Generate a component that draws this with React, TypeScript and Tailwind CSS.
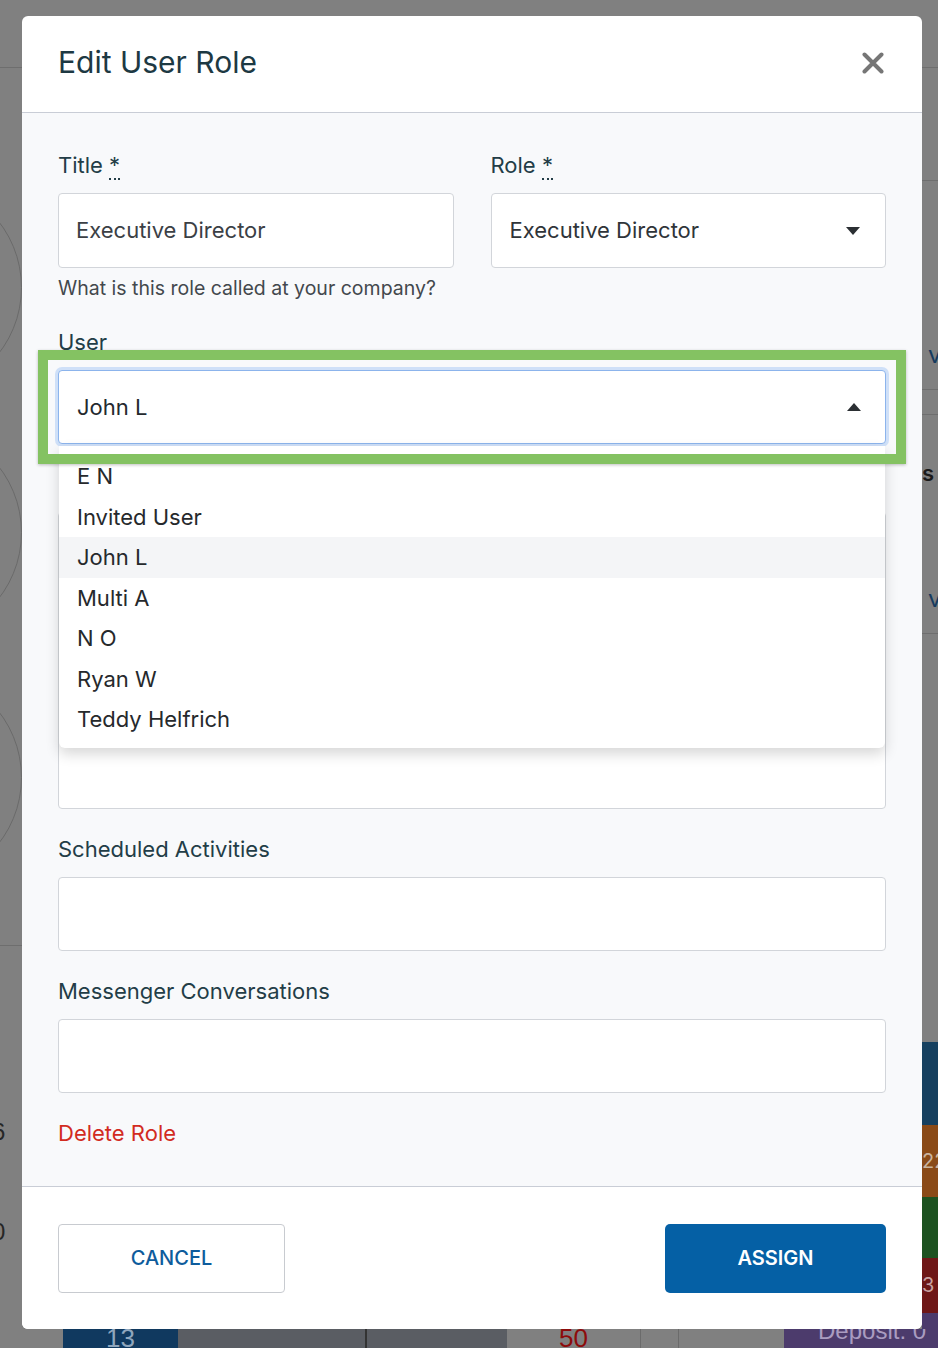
import { ReactNode } from "react";

const users = ["E N", "Invited User", "John L", "Multi A", "N O", "Ryan W", "Teddy Helfrich"];

function Label({ children, required }: { children: ReactNode; required?: boolean }) {
  return (
    <div className="h-[28px] leading-[28px] text-[22px] text-[#233d47] mb-[14px]">
      {children}
      {required && (
        <>
          {" "}
          <abbr title="required" className="no-underline border-b-2 border-dotted border-[#233d47] leading-none">
            *
          </abbr>
        </>
      )}
    </div>
  );
}

function Caret({ up }: { up?: boolean }) {
  return (
    <svg width="14" height="8" viewBox="0 0 14 8" className={up ? "rotate-180" : ""}>
      <path d="M0 0h14L7 8z" fill="#2b2f33" />
    </svg>
  );
}

function Background() {
  return (
    <div className="flex h-full w-full flex-col">
      <div className="h-[68px] shrink-0 border-b border-[#6e6e6e]" />
      <div className="flex min-h-0 flex-1">
        <div className="flex w-[22px] shrink-0 flex-col">
          <div className="mt-[112px] flex flex-col gap-[30px]">
            {[0, 1, 2].map((i) => (
              <div key={i} className="-ml-[193px] h-[215px] w-[215px] shrink-0 rounded-full border border-[#6a6a6a]" />
            ))}
          </div>
          <div className="mt-[60px] border-t border-[#6e6e6e]" />
          <div className="-ml-[8px] mt-[172px] text-[24px] leading-[28px] text-[#262626] font-['Liberation_Sans',sans-serif]">6</div>
          <div className="-ml-[8px] mt-[72px] text-[24px] leading-[28px] text-[#262626] font-['Liberation_Sans',sans-serif]">0</div>
        </div>
        <div className="flex-1" />
        <div className="flex w-[16px] shrink-0 flex-col">
          <div className="mt-[112px] border-t border-[#6e6e6e]" />
          <div className="mt-[160px] pl-[6px] text-[24px] leading-[28px] text-[#163a5e]">v</div>
          <div className="mt-[20px] border-t border-[#6e6e6e]" />
          <div className="mt-[24px] border-t border-[#6e6e6e]" />
          <div className="mt-[44px] text-[22px] font-semibold leading-[28px] text-[#1a1a1a]">s</div>
          <div className="mt-[98px] pl-[6px] text-[24px] leading-[28px] text-[#163a5e]">v</div>
          <div className="mt-[20px] border-t border-[#6e6e6e]" />
          <div className="flex-1" />
          <div className="h-[83px] bg-[#16405f]" />
          <div className="h-[72px] bg-[#8a4a17] text-[20px] leading-[72px] text-[#c9b39e]">22</div>
          <div className="h-[61px] bg-[#1d5220]" />
          <div className="h-[55px] bg-[#6e1717] text-[20px] leading-[55px] text-[#c8a0a0]">3</div>
          <div className="h-[16px] bg-[#4c3b6c]" />
        </div>
      </div>
      <div className="flex h-[19px] shrink-0 text-[26px] leading-[19px]">
        <div className="w-[63px] bg-[#808080]" />
        <div className="w-[115px] overflow-hidden bg-[#10395f] text-center font-['Liberation_Sans_Narrow','Liberation_Sans',sans-serif] text-[#8fa6bd]">13</div>
        <div className="w-[187px] bg-[#5a5d63]" />
        <div className="w-[2px] bg-[#333]" />
        <div className="w-[140px] bg-[#5a5d63]" />
        <div className="w-[133px] overflow-hidden text-center font-['Liberation_Sans',sans-serif] text-[#8d0b0b]">50</div>
        <div className="w-px bg-[#6b6b6b]" />
        <div className="w-[37px]" />
        <div className="w-px bg-[#6b6b6b]" />
        <div className="w-[105px]" />
        <div className="flex-1 overflow-hidden bg-[#4c3b6c] pl-[34px] text-[24px] leading-[4px] text-[#a99cc0] font-['Liberation_Sans',sans-serif]">Deposit: 0</div>
      </div>
    </div>
  );
}

export default function App() {
  return (
    <div className="relative h-[1348px] w-[938px] overflow-hidden bg-[#808080] font-['Inter','Noto_Sans',sans-serif]">
      <Background />

      <div className="absolute inset-0 pl-[22px] pt-[16px]">
        <div className="flex h-[1313px] w-[900px] flex-col overflow-visible rounded-[6px] bg-white">
          {/* header */}
          <div className="flex h-[97px] shrink-0 items-center justify-between border-b border-[#c9cdd6] pl-[36px] pr-[38px]">
            <h2 className="-mt-[3px] text-[30px] font-normal text-[#1d3943]">Edit User Role</h2>
            <button className="-mt-[3px] text-[#767676]" aria-label="Close">
              <svg width="22" height="22" viewBox="0 0 22 22">
                <path d="M2.5 2.5l17 17M19.5 2.5l-17 17" stroke="currentColor" strokeWidth="4" strokeLinecap="round" />
              </svg>
            </button>
          </div>

          {/* body */}
          <div className="flex flex-1 flex-col bg-[#f8f9fb] px-[36px] pt-[38px]">
            <div className="grid grid-cols-2 gap-x-[37px]">
              <div>
                <Label required>Title</Label>
                <div className="flex h-[75px] items-center rounded-[4px] border border-[#d2d5da] bg-white px-[17px] text-[22px] text-[#3b4045]">
                  Executive Director
                </div>
              </div>
              <div>
                <Label required>Role</Label>
                <div className="flex h-[75px] items-center justify-between rounded-[4px] border border-[#d2d5da] bg-white pl-[18px] pr-[25px] text-[22px] text-[#2f3439]">
                  Executive Director
                  <Caret />
                </div>
              </div>
            </div>
            <p className="mt-[8px] text-[19.5px] leading-[24px] text-[#43484d]">What is this role called at your company?</p>

            <div className="mt-[28px]">
              <Label>User</Label>
              <div className="relative z-10">
                <div className="flex h-[74px] items-center justify-between rounded-[4px] border border-[#8cb4ec] bg-white pl-[18px] pr-[24px] text-[22px] text-[#24292e] shadow-[0_0_0_3px_#cfe0f8]">
                  John L
                  <Caret up />
                </div>
                <ul className="absolute left-px right-px top-[calc(100%+2px)] rounded-b-[6px] bg-white pt-[10px] pb-[8px] shadow-[0_6px_14px_rgba(0,0,0,0.16)]">
                  {users.map((u) => (
                    <li
                      key={u}
                      className={`h-[40.5px] px-[18px] text-[22px] leading-[40.5px] text-[#26292c] ${u === "John L" ? "bg-[#f4f5f7] text-[#16191c]" : ""}`}
                    >
                      {u}
                    </li>
                  ))}
                </ul>
                <div className="pointer-events-none absolute -inset-[20px] border-[10px] border-[#84c262] shadow-[0_1px_3px_rgba(0,0,0,0.25)]" />
              </div>
            </div>

            <div className="mt-[26px]">
              <Label>Permissions</Label>
              <div className="h-[297px] rounded-[4px] border border-[#d2d5da] bg-white" />
            </div>

            <div className="mt-[26px]">
              <Label>Scheduled Activities</Label>
              <div className="h-[74px] rounded-[4px] border border-[#d2d5da] bg-white" />
            </div>

            <div className="mt-[26px]">
              <Label>Messenger Conversations</Label>
              <div className="h-[74px] rounded-[4px] border border-[#d2d5da] bg-white" />
            </div>

            <button className="mt-[26px] self-start text-[22px] leading-[28px] text-[#d22b1f]">Delete Role</button>
          </div>

          {/* footer */}
          <div className="flex h-[143px] shrink-0 items-center justify-between rounded-b-[6px] border-t border-[#c9cdd6] bg-white px-[36px]">
            <button className="h-[69px] w-[227px] rounded-[4px] border border-[#c8cbd0] bg-white text-[20px] font-medium text-[#0e5c9c]">
              CANCEL
            </button>
            <button className="h-[69px] w-[221px] rounded-[5px] bg-[#0560a5] text-[20px] font-semibold text-white">
              ASSIGN
            </button>
          </div>
        </div>
      </div>
    </div>
  );
}
